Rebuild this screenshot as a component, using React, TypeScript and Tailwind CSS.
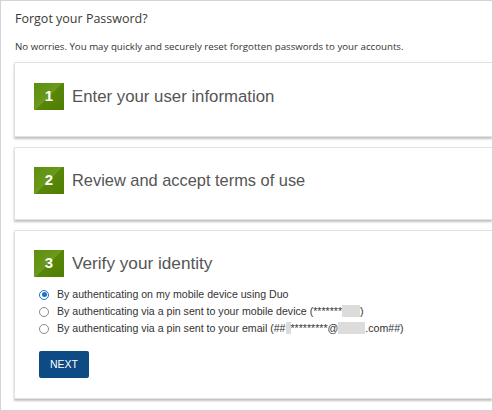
const STEPS = [
  { n: 1, label: "Enter your user information", h: "h-[75px]", text: "text-[16.8px]", pt: "pt-[20px]" },
  { n: 2, label: "Review and accept terms of use", h: "h-[73px]", text: "text-[16.4px]", pt: "pt-[19px]" },
];

function Badge({ n }: { n: number }) {
  return (
    <div className="flex h-[27px] w-[30px] shrink-0 items-center justify-center bg-[linear-gradient(135deg,#5e8e0c_0%,#6b9a1c_50%,#578708_50%,#4f7d05_100%)] text-[15px] font-bold text-white">
      {n}
    </div>
  );
}

function Masked({ w }: { w: string }) {
  return <span className={`inline-block h-[12px] align-[-2px] bg-[#dcdcdc] ${w}`} />;
}

function Radio({ on, children }: { on?: boolean; children: React.ReactNode }) {
  return (
    <label className="flex h-[17px] items-center gap-[8px]">
      <span
        className={`flex h-[10px] w-[10px] items-center justify-center rounded-full border ${on ? "border-[#1f6fc4]" : "border-[#8a8a8a]"}`}
      >
        {on && <span className="h-[5px] w-[5px] rounded-full bg-[#1f6fc4]" />}
      </span>
      <span>{children}</span>
    </label>
  );
}

export default function App() {
  return (
    <div
      className="h-[411px] w-[493px] overflow-hidden border border-[#d4d4d4] bg-white text-[#333]"
      style={{ fontFamily: "'Liberation Sans', Arial, sans-serif" }}
    >
      <div className="pl-[13px]">
        <div className="pt-[10px] pl-[1px] text-[12.5px] leading-[16px] text-[#3a3a3a]" style={{ fontFamily: "'Open Sans', sans-serif" }}>
          Forgot your Password?
        </div>
        <div className="pt-[13px] pl-[1px] text-[9.7px] leading-[14px] text-[#333]" style={{ fontFamily: "'Open Sans', sans-serif" }}>
          No worries. You may quickly and securely reset forgotten passwords to your accounts.
        </div>

        <div className="mt-[8px] flex flex-col gap-[10px]">
          {STEPS.map((s) => (
            <div
              key={s.n}
              className={`${s.h} border border-r-0 border-[#e2e2e2] bg-white pl-[19px] ${s.pt} shadow-[0_2px_2px_rgba(0,0,0,0.25)]`}
            >
              <div className="flex items-center gap-[8px]">
                <Badge n={s.n} />
                <span className={`${s.text} text-[#555]`}>{s.label}</span>
              </div>
            </div>
          ))}

          <div className="h-[169px] border border-r-0 border-[#e2e2e2] bg-white pl-[19px] pt-[19px] shadow-[0_2px_2px_rgba(0,0,0,0.25)]">
            <div className="flex items-center gap-[8px]">
              <Badge n={3} />
              <span className="text-[17.2px] text-[#555]">Verify your identity</span>
            </div>
            <div className="mt-[9px] pl-[5px] text-[10.6px] text-[#333]">
              <Radio on>By authenticating on my mobile device using Duo</Radio>
              <Radio>
                By authenticating via a pin sent to your mobile device (*******
                <Masked w="w-[18px]" />)
              </Radio>
              <Radio>
                By authenticating via a pin sent to your email (##
                <Masked w="w-[5px]" />
                *********@
                <Masked w="w-[27px]" />
                .com##)
              </Radio>
            </div>
            <button
              type="button"
              className="ml-[5px] mt-[14px] h-[27px] w-[50px] rounded-[2px] bg-[#0e4a84] text-[10.5px] text-white"
            >
              NEXT
            </button>
          </div>
        </div>
      </div>
    </div>
  );
}
